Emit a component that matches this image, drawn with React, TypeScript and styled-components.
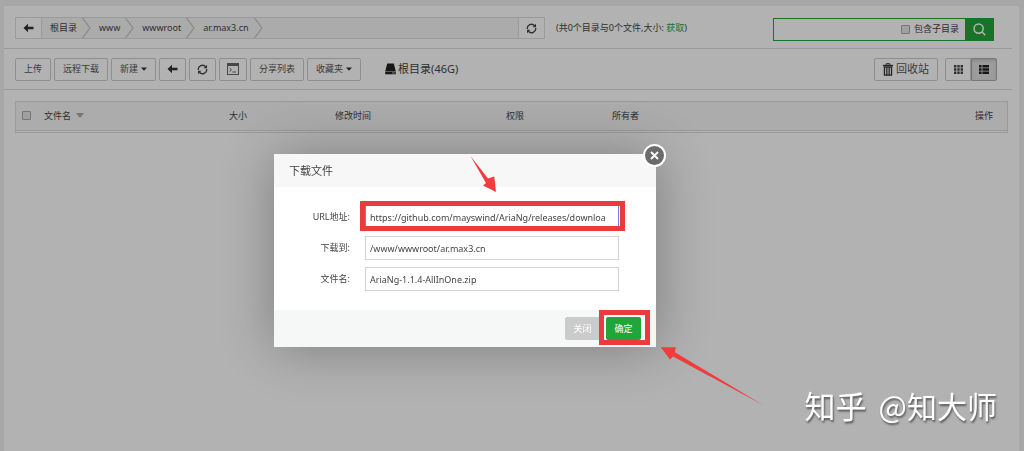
import React from 'react';
import styled, { createGlobalStyle } from 'styled-components';

const GlobalStyle = createGlobalStyle`
  * { box-sizing: border-box; }
  body {
    margin: 0;
    background: #f0f0f0;
    color: #444;
    font-family: "Noto Sans", "Noto Sans CJK SC", sans-serif;
    font-size: 9px;
    line-height: 14px;
  }
  button, input {
    margin: 0;
    font: inherit;
    color: inherit;
  }
  button { cursor: pointer; }
`;

const Page = styled.div`
  min-height: 100vh;
  padding: 6px 5px 0 4px;
  display: flex;
`;

const Panel = styled.main`
  flex: 1;
  min-width: 0;
  background: #fff;
  padding-right: 7px;
`;

const Bar = styled.div<{ $height: number; $top?: number }>`
  display: flex;
  align-items: center;
  height: ${(p) => p.$height}px;
  padding: ${(p) => p.$top ?? 0}px 15px 0 11px;
  border-bottom: 1px solid #ddd;
`;

const PathBar = styled.nav`
  display: flex;
  width: 530px;
  height: 22px;
  border: 1px solid #ddd;
  background: #f5f5f5;
`;

const PathButton = styled.button`
  display: flex;
  align-items: center;
  justify-content: center;
  width: 25px;
  padding: 0;
  border: 0;
  background: #fff;
`;

const Crumbs = styled.ol`
  flex: 1;
  display: flex;
  margin: 0;
  padding: 0;
  list-style: none;
  border: solid #ddd;
  border-width: 0 1px;
`;

const Crumb = styled.li`
  display: flex;
  align-items: center;
  gap: 5px;
  padding-left: 8px;
  a { color: inherit; text-decoration: none; }
`;

const Summary = styled.p`
  margin: 0 auto 0 11px;
  white-space: nowrap;
  a { color: #20a53a; text-decoration: none; }
`;

const Search = styled.form`
  display: flex;
  width: 221px;
  height: 23px;
  margin: 2px 3px 0 0;
  border: 1px solid #20a53a;
`;

const SearchInput = styled.input`
  flex: 1;
  min-width: 0;
  border: 0;
  outline: 0;
  background: none;
`;

const CheckLabel = styled.label`
  display: flex;
  align-items: center;
  gap: 4px;
  padding-right: 6px;
  white-space: nowrap;
`;

const Check = styled.input.attrs({ type: 'checkbox' })`
  appearance: none;
  display: block;
  width: 9px;
  height: 9px;
  border: 1px solid #aaa;
  border-radius: 1px;
  background: #e6e6e6;
`;

const SearchButton = styled.button`
  display: flex;
  align-items: center;
  justify-content: center;
  width: 28px;
  padding: 0;
  border: 0;
  background: #20a53a;
  color: #fff;
`;

const Tools = styled.div`
  display: flex;
  gap: 3px;
`;

const ToolButton = styled.button<{ $large?: boolean; $icon?: boolean }>`
  display: flex;
  align-items: center;
  justify-content: center;
  gap: 3px;
  height: 23px;
  padding: 0 ${(p) => (p.$icon ? 7 : 8)}px;
  border: 1px solid #ccc;
  border-radius: 2px;
  background: #fff;
  color: #555;
  font-size: ${(p) => (p.$large ? 11 : 9)}px;
  white-space: nowrap;
`;

const Disk = styled.div`
  display: flex;
  align-items: center;
  gap: 2px;
  margin: 0 auto 0 24px;
  font-size: 11px;
`;

const ViewSwitch = styled.div`
  display: flex;
  margin-left: 7px;
`;

const ViewButton = styled.button<{ $active?: boolean }>`
  display: flex;
  align-items: center;
  justify-content: center;
  width: 26px;
  height: 23px;
  padding: 0;
  border: 1px solid ${(p) => (p.$active ? '#adadad' : '#ccc')};
  border-radius: ${(p) => (p.$active ? '0 2px 2px 0' : '2px 0 0 2px')};
  background: ${(p) => (p.$active ? '#e0e0e0' : '#fff')};
  box-shadow: ${(p) => (p.$active ? 'inset 0 2px 3px rgba(0, 0, 0, 0.12)' : 'none')};
`;

const TableWrap = styled.div`
  margin: 11px 4px 0 11px;
  padding-bottom: 1px;
  border: 1px solid #ddd;
`;

const Table = styled.table`
  width: 100%;
  table-layout: fixed;
  border-collapse: collapse;
`;

const Th = styled.th<{ $width?: number; $end?: boolean }>`
  width: ${(p) => (p.$width ? `${p.$width}px` : 'auto')};
  height: 28px;
  padding: 0 ${(p) => (p.$end ? 14 : 0)}px 0 0;
  border-bottom: 1px solid #ddd;
  background: #f6f6f6;
  font-weight: 400;
  text-align: ${(p) => (p.$end ? 'right' : 'left')};
  ${Check} { margin-left: 6px; }
`;

const SortMark = styled.span`
  display: inline-block;
  margin-left: 5px;
  border: solid transparent;
  border-width: 5px 4px 0;
  border-top-color: #aaa;
  vertical-align: 1px;
`;

const Shade = styled.div`
  position: fixed;
  inset: 0;
  background: rgba(0, 0, 0, 0.3);
`;

const Dialog = styled.section`
  position: absolute;
  left: 274px;
  top: 154px;
  width: 382px;
  background: #fff;
  box-shadow: 1px 1px 50px rgba(0, 0, 0, 0.3);
`;

const DialogTitle = styled.h2`
  margin: 0;
  padding: 0 15px;
  background: #f7f7f7;
  font-size: 11px;
  font-weight: 400;
  line-height: 33px;
`;

const Fields = styled.div`
  display: flex;
  flex-direction: column;
  gap: 7px;
  padding: 18px 37px 19px 16px;
`;

const Field = styled.div`
  position: relative;
  display: flex;
  align-items: center;
  label {
    width: 60px;
    margin-right: 15px;
    text-align: right;
  }
`;

const TextInput = styled.input<{ $focused?: boolean }>`
  flex: 1;
  min-width: 0;
  height: 24px;
  padding: 0 0 0 4px;
  border: 1px solid ${(p) => (p.$focused ? '#7a7af0' : '#d2d2d2')};
  outline: 0;
  background: #fff;
`;

const DialogFooter = styled.footer`
  display: flex;
  justify-content: flex-end;
  gap: 6px;
  padding: 7px 15px;
  background: #f6f8f8;
`;

const ActionSpot = styled.span`
  position: relative;
  display: flex;
`;

const ActionButton = styled.button<{ $primary?: boolean }>`
  width: 35px;
  height: 23px;
  padding: 0;
  border: 0;
  border-radius: 2px;
  background: ${(p) => (p.$primary ? '#20a53a' : '#cbcbcb')};
  color: #fff;
`;

const CloseButton = styled.button`
  position: absolute;
  top: -10px;
  right: -10px;
  display: flex;
  align-items: center;
  justify-content: center;
  width: 23px;
  height: 23px;
  padding: 0;
  border: 2px solid #fff;
  border-radius: 50%;
  background: #6b6b6b;
  color: #fff;
`;

const Highlight = styled.i<{ $inset: string }>`
  position: absolute;
  inset: ${(p) => p.$inset};
  border: 5px solid #ec3b3f;
  pointer-events: none;
`;

const Pointer = styled.svg<{ $left: number; $top: number }>`
  position: absolute;
  left: ${(p) => p.$left}px;
  top: ${(p) => p.$top}px;
  fill: #f03c3c;
  pointer-events: none;
`;

const Watermark = styled.div`
  position: fixed;
  right: 27px;
  bottom: 24px;
  display: flex;
  gap: 12px;
  color: #fff;
  font-family: "Noto Sans CJK SC", sans-serif;
  font-size: 30px;
  line-height: 44px;
  text-shadow: 1px 2px 2px rgba(0, 0, 0, 0.5);
  b { font-size: 31px; font-weight: 400; }
`;

const BackIcon = () => (
  <svg width="11" height="10" viewBox="0 0 11 10" fill="#333" aria-hidden="true">
    <path d="M0.5 5 5 0.8V3.8H10.5V6.2H5V9.2Z" />
  </svg>
);

const RefreshIcon = () => (
  <svg width="11" height="11" viewBox="0 0 11 11" fill="none" stroke="#444" strokeWidth="1.3" aria-hidden="true">
    <path d="M1.3 6A4.2 4.2 0 0 1 8.6 2.7M9.7 5A4.2 4.2 0 0 1 2.4 8.3" />
    <path d="M10 0.8V4.2H6.6ZM1 10.2V6.8H4.4Z" fill="#444" stroke="none" />
  </svg>
);

const TerminalIcon = () => (
  <svg width="12" height="12" viewBox="0 0 12 12" fill="none" stroke="#666" aria-hidden="true">
    <rect x="0.5" y="0.5" width="11" height="11" />
    <path d="M0.5 2H11.5" strokeWidth="2" />
    <path d="M2.5 5 4.5 6.8 2.5 8.6M5.5 9H9" />
  </svg>
);

const CaretIcon = () => (
  <svg width="6" height="4" viewBox="0 0 6 4" fill="#333" aria-hidden="true">
    <path d="M0 0.5H6L3 3.7Z" />
  </svg>
);

const CrumbArrow = () => (
  <svg width="9" height="20" viewBox="0 0 9 20" fill="none" stroke="#ccc" strokeWidth="1.4" aria-hidden="true">
    <path d="M0.5 0 8 10 0.5 20" />
  </svg>
);

const DiskIcon = () => (
  <svg width="11" height="12" viewBox="0 0 11 12" fill="#222" aria-hidden="true">
    <path d="M2.2 0.5H8.8L10.8 8.4H0.2Z" />
    <path d="M0.2 8.9H10.8V11.3H0.2Z" />
    <path d="M7 10H9.8" stroke="#bbb" />
  </svg>
);

const TrashIcon = () => (
  <svg width="10" height="13" viewBox="0 0 10 13" fill="none" stroke="#333" aria-hidden="true">
    <path d="M3.2 1.8V0.7H6.8V1.8" />
    <path d="M0 2.6H10" strokeWidth="1.6" />
    <path d="M1.4 4.2H8.6V12.2H1.4Z" strokeWidth="1.2" />
    <path d="M3.4 4.5V12M5 4.5V12M6.6 4.5V12" strokeWidth="0.9" />
  </svg>
);

const GridIcon = () => (
  <svg width="9" height="9" viewBox="0 0 9 9" fill="#444" aria-hidden="true">
    <path d="M0 0h2.4v2.4H0zM3.3 0h2.4v2.4H3.3zM6.6 0H9v2.4H6.6zM0 3.3h2.4v2.4H0zM3.3 3.3h2.4v2.4H3.3zM6.6 3.3H9v2.4H6.6zM0 6.6h2.4V9H0zM3.3 6.6h2.4V9H3.3zM6.6 6.6H9V9H6.6z" />
  </svg>
);

const ListIcon = () => (
  <svg width="10" height="9" viewBox="0 0 10 9" fill="#222" aria-hidden="true">
    <path d="M0 0h2.6v2.4H0zM3.4 0H10v2.4H3.4zM0 3.3h2.6v2.4H0zM3.4 3.3H10v2.4H3.4zM0 6.6h2.6V9H0zM3.4 6.6H10V9H3.4z" />
  </svg>
);

const SearchIcon = () => (
  <svg width="13" height="13" viewBox="0 0 13 13" fill="none" stroke="currentColor" strokeWidth="1.5" aria-hidden="true">
    <circle cx="5.6" cy="5.6" r="4.6" />
    <path d="M9 9 12.3 12.3" />
  </svg>
);

const CloseIcon = () => (
  <svg width="9" height="9" viewBox="0 0 9 9" stroke="currentColor" strokeWidth="1.8" aria-hidden="true">
    <path d="M1 1 8 8M8 1 1 8" />
  </svg>
);

const crumbs = ['根目录', 'www', 'wwwroot', 'ar.max3.cn'];

const columns = [
  { name: '大小', width: 106 },
  { name: '修改时间', width: 171 },
  { name: '权限', width: 106 },
  { name: '所有者', width: 200 },
];

export default function App() {
  return (
    <>
      <GlobalStyle />
      <Page>
        <Panel>
          <Bar $height={43} $top={2}>
            <PathBar aria-label="路径">
              <PathButton aria-label="返回"><BackIcon /></PathButton>
              <Crumbs>
                {crumbs.map((name) => (
                  <Crumb key={name}>
                    <a href="#">{name}</a>
                    <CrumbArrow />
                  </Crumb>
                ))}
              </Crumbs>
              <PathButton aria-label="刷新"><RefreshIcon /></PathButton>
            </PathBar>
            <Summary>(共0个目录与0个文件,大小: <a href="#">获取</a>)</Summary>
            <Search onSubmit={(e) => e.preventDefault()}>
              <SearchInput aria-label="搜索" />
              <CheckLabel><Check />包含子目录</CheckLabel>
              <SearchButton aria-label="搜索"><SearchIcon /></SearchButton>
            </Search>
          </Bar>
          <Bar $height={41}>
            <Tools>
              <ToolButton>上传</ToolButton>
              <ToolButton>远程下载</ToolButton>
              <ToolButton>新建<CaretIcon /></ToolButton>
              <ToolButton $icon aria-label="返回"><BackIcon /></ToolButton>
              <ToolButton $icon aria-label="刷新"><RefreshIcon /></ToolButton>
              <ToolButton $icon aria-label="终端"><TerminalIcon /></ToolButton>
              <ToolButton>分享列表</ToolButton>
              <ToolButton>收藏夹<CaretIcon /></ToolButton>
            </Tools>
            <Disk><DiskIcon />根目录(46G)</Disk>
            <ToolButton $large><TrashIcon />回收站</ToolButton>
            <ViewSwitch>
              <ViewButton aria-label="图标"><GridIcon /></ViewButton>
              <ViewButton $active aria-label="列表"><ListIcon /></ViewButton>
            </ViewSwitch>
          </Bar>
          <TableWrap>
            <Table>
              <thead>
                <tr>
                  <Th $width={28}><Check aria-label="全选" /></Th>
                  <Th $width={185}>文件名<SortMark /></Th>
                  {columns.map((c) => (
                    <Th key={c.name} $width={c.width}>{c.name}</Th>
                  ))}
                  <Th $end>操作</Th>
                </tr>
              </thead>
            </Table>
          </TableWrap>
        </Panel>
      </Page>
      <Shade />
      <Dialog role="dialog" aria-labelledby="dialog-title">
        <DialogTitle id="dialog-title">下载文件</DialogTitle>
        <Fields>
          <Field>
            <label htmlFor="url">URL地址:</label>
            <TextInput id="url" $focused defaultValue="https://github.com/mayswind/AriaNg/releases/downloa" />
            <Highlight $inset="-4px -6px -2px 70px" />
          </Field>
          <Field>
            <label htmlFor="target">下载到:</label>
            <TextInput id="target" defaultValue="/www/wwwroot/ar.max3.cn" />
          </Field>
          <Field>
            <label htmlFor="filename">文件名:</label>
            <TextInput id="filename" defaultValue="AriaNg-1.1.4-AllInOne.zip" />
          </Field>
        </Fields>
        <DialogFooter>
          <ActionButton>关闭</ActionButton>
          <ActionSpot>
            <ActionButton $primary>确定</ActionButton>
            <Highlight $inset="-7px -9px -5px -7px" />
          </ActionSpot>
        </DialogFooter>
        <CloseButton aria-label="关闭"><CloseIcon /></CloseButton>
        <Pointer $left={196} $top={2} width="27" height="37" viewBox="0 0 27 37">
          <path d="M0.5 0 18 22.5 24.3 20.5 26 36 13 29.5 16 27Z" />
        </Pointer>
        <Pointer $left={386} $top={193} width="104" height="60" viewBox="0 0 104 60">
          <path d="M0.7 0.3H15.7L15 5.3 103 58 13 9.5 10 12.5Z" />
        </Pointer>
      </Dialog>
      <Watermark><b>知乎</b><span>@知大师</span></Watermark>
    </>
  );
}
